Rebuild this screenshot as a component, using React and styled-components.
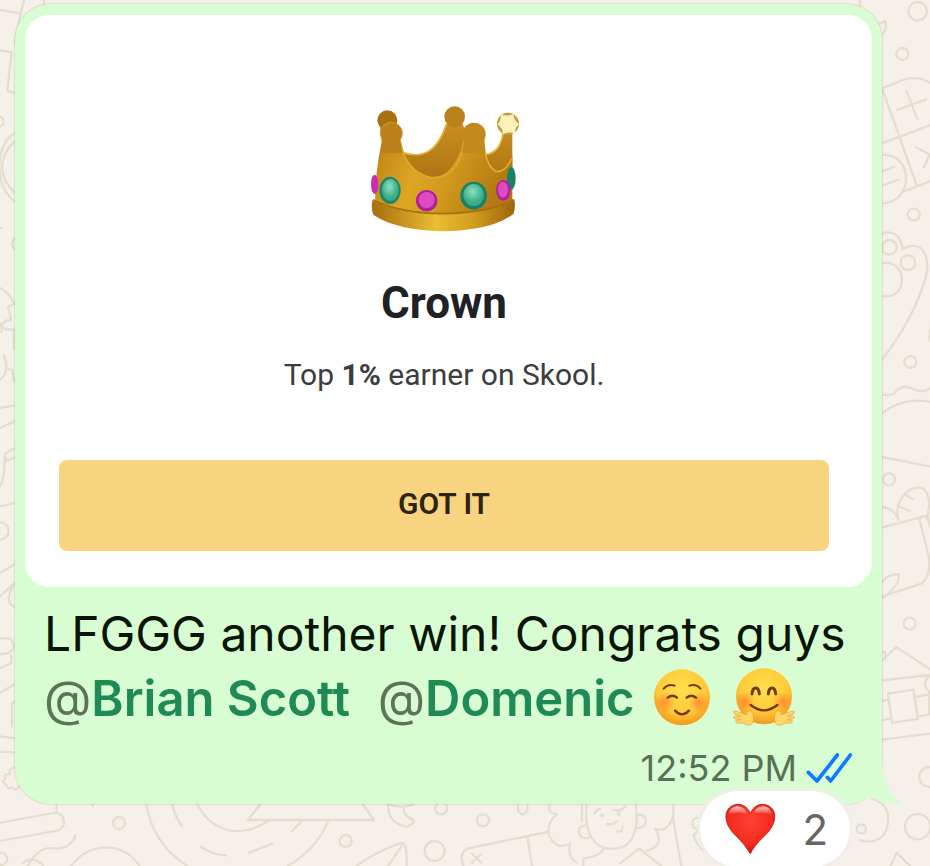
import styled, { createGlobalStyle } from "styled-components";

const GlobalStyle = createGlobalStyle`
  * {
    box-sizing: border-box;
  }

  body {
    margin: 0;
    background-color: #f5f1ea;
    font-family: Inter, "Liberation Sans", sans-serif;
  }
`;

const Chat = styled.main`
  position: relative;
  min-height: 100vh;
  padding: 4px 48px 0 15px;
  overflow: hidden;
`;

const Wallpaper = styled.svg`
  position: absolute;
  top: 0;
  left: 0;
  width: 100%;
  height: 100%;
  fill: none;
  stroke: #e6ddd1;
  stroke-width: 7;
  stroke-linecap: round;
  stroke-linejoin: round;
`;

const Message = styled.article`
  position: relative;
  display: flex;
  flex-direction: column;
  align-items: flex-end;
`;

const Bubble = styled.div`
  position: relative;
  z-index: 0;
  width: 100%;
  padding: 11px 10px 16px;
  border-radius: 36px;
  background-color: #d8fdd2;
  box-shadow: 0 0 1px 1px rgba(120, 110, 90, 0.16);
`;

/* sits above the bubble background but under the text */
const Tail = styled.svg`
  position: absolute;
  right: -20px;
  bottom: 0;
  z-index: -1;
  width: 60px;
  height: 46px;
  fill: #d8fdd2;
`;

const Card = styled.section`
  display: flex;
  flex-direction: column;
  align-items: center;
  padding: 80px 43px 36px 34px;
  border-radius: 24px;
  background-color: #fff;
  color: #202124;
  font-family: Roboto, "Liberation Sans", sans-serif;
`;

const CrownIcon = styled.svg`
  width: 170px;
  height: 145px;
`;

const Title = styled.h1`
  margin: 36px 0 0;
  font-size: 44px;
  font-weight: 700;
  line-height: 54px;
`;

const Caption = styled.p`
  margin: 27px 0 0;
  color: #3c3d40;
  font-size: 30px;
  line-height: 36px;
`;

const Button = styled.button`
  width: 100%;
  height: 91px;
  margin-top: 67px;
  padding: 0 0 4px;
  border: none;
  border-radius: 8px;
  background-color: #f8d481;
  color: #2c2415;
  font-family: inherit;
  font-size: 30px;
  font-weight: 600;
`;

const Text = styled.p`
  margin: 14px 0 0;
  padding: 0 19px;
  color: #0a1508;
  font-size: 48px;
  line-height: 65px;
`;

const Mention = styled.a`
  margin-right: 14px;
  color: #1f8a56;
  font-size: 49px;
  font-weight: 600;
  text-decoration: none;
`;

const At = styled.span`
  color: #5c7358;
  font-weight: 400;
`;

const Emoji = styled.svg`
  width: 66px;
  height: 60px;
  margin-right: 16px;
  vertical-align: -11px;
`;

const Meta = styled.div`
  display: flex;
  align-items: center;
  justify-content: flex-end;
  gap: 8px;
  margin-top: 17px;
  padding-right: 18px;
  color: #597056;
  font-size: 36px;
  line-height: 40px;
`;

const Ticks = styled.svg`
  width: 49px;
  height: 35px;
  fill: none;
  stroke: #0b7cff;
  stroke-width: 11;
  stroke-linecap: round;
  stroke-linejoin: round;
`;

const Reaction = styled.button`
  position: relative;
  z-index: 1;
  display: flex;
  align-items: center;
  gap: 26px;
  height: 76px;
  margin: -13px 32px -2px 0;
  padding: 0 22px 0 24px;
  border: none;
  border-radius: 38px;
  background-color: #fff;
  box-shadow: 0 0 0 3px #f1eee6;
  color: #666;
  font-family: inherit;
  font-size: 42px;
`;

const Heart = styled.svg`
  width: 52px;
  height: 52px;
`;

function Doodles() {
  return (
    <Wallpaper
      viewBox="0 0 930 866"
      preserveAspectRatio="xMinYMin slice"
      aria-hidden="true"
    >
      {/* left edge */}
      <g transform="scale(0.3333)">
        <path d="M0 30l62 11M72 0L62 42 44 130M132 0v18M0 152l35 4-13 117 21 6" />
        <circle cx="-4" cy="365" r="15" />
        <path d="M44 400C-14 430-20 560 44 604M44 424C-6 470-6 530 44 578M0 684h6M44 714c-12 12-12 22 0 34" />
        <path d="M0 864q32 16 42 48l-18 10 10 38q-28 0-28 20 8 12 36 8v60M0 970q8 16 4 26M12 1066q18 50-12 74M20 1108h16l6 36M0 1224l44-8M0 1284l44-20" />
      </g>
      <g transform="translate(0 433) scale(0.3333)">
        <path d="M44 46L18 60q-8 12 4 22l22-8M14 74Q14 140 0 160M0 220l44-10M0 420l44-26M0 490l44-40M44 450q-18 30-18 50 4 16 18 22" />
        <circle cx="0" cy="294" r="26" />
        <path d="M0 616h28q14 8 14 28-10 20-42 20M34 666v24L0 706M0 780l44-26M44 806l-8 4v70M0 910l44 6M0 956l44 2" />
        <path d="M44 1004q-20 4-14 20-20-4-14 14-14 8 4 18-2 14 18 8 6 12 18-2M0 1170l170-32v-30M0 1224l176-32q24-14 12-42l-18-12" />
        <circle cx="4" cy="1278" r="18" />
        <path d="M84 1299q32-62 80-52 50 0 62-40M70 1290q30-24 60 8" />
      </g>
      {/* right edge */}
      <g transform="translate(860 0) scale(0.3333)">
        <circle cx="173" cy="34" r="28" />
        <circle cx="127" cy="162" r="18" />
        <circle cx="161" cy="644" r="18" />
        <circle cx="88" cy="742" r="22" />
        <circle cx="144" cy="788" r="22" />
        <circle cx="151" cy="1086" r="18" />
        <path d="M0 0v20M58 72l18-10q6 24-10 44M66 265l62-25q50-16 90 14M66 265l104 290M66 430l144-54M132 574l78-30M139 272l33 84M112 330l86-32M168 442l42 22M192 502l18-40" />
        <path d="M66 464c96-4 96 144 0 146M66 515l36-14M66 557l50-18M66 700q54-14 62 48c60-38 90 32 66 94Q160 956 66 1080M66 790c80-14 80 114 0 98M66 1184q34 6 44-12 20-20 46-6 30 14 54 0M66 1240q64-50 144-34M214 980q-12 30 0 50" />
      </g>
      <g transform="translate(860 433) scale(0.3333)">
        <path d="M66 72l144 28M66 284l136-36M116 260c-20-50 34-114 76-92q26 30 8 90M134 184l24 14M120 222l28 12M66 222q36 4 50 38M178 258l28 112q8 60-22 82L66 490M204 256l6 26M66 446q20-24 50-22 6 30-50 74" />
        <circle cx="87" cy="139" r="18" />
        <circle cx="149" cy="572" r="18" />
        <path d="M66 684l42-42 102 66M66 742l144-16M66 656l10 4v18M84 782l76-12 14 88-78 12zM66 804l18-4M66 862l28-6M164 792l46-8M174 850l36-6M66 920l144-18M212 728q-32 20-4 48v68" />
        <circle cx="208" cy="1032" r="30" />
        <circle cx="173" cy="1181" r="38" />
        <circle cx="4" cy="1188" r="14" />
        <path d="M36 1096q60 20 46 82-12 60-82 44M92 1299l18-40 40 40" />
      </g>
      {/* bottom edge */}
      <g transform="translate(0 790) scale(0.3333)">
        <circle cx="357" cy="99" r="18" />
        <circle cx="1037" cy="153" r="18" />
        <circle cx="1324" cy="55" r="18" />
        <circle cx="1304" cy="183" r="30" />
        <path d="M214 228q40-56 108-56 64 4 96 56M278 40v8M438 40q22 124 124 188M516 40q8 40 30 68M590 40c54 104 150 98 218 50M780 44l-36 46h378l-34-48M984 94q-32 80-120 134M905 94l-30 30M602 170q40 26 76 26M748 188l70-28M1070 228q50-40 136-70 16 0 14 70M1206 166l-40 60M1164 44q0 54 54 66 26-6 22-22-30-8-30-38M1164 44q40 12 76 0" />
      </g>
      <g transform="translate(460 780) scale(0.3333)">
        <circle cx="69" cy="121" r="18" />
        <path d="M174 70v22q14 22 28 0V70M270 70q-10 30 20 32-40 40-16 76 20 30 56 14-8 40 20 56M10 258q-16-44 20-54l232-48M202 170l14 88M36 222l28 26M64 222l-28 26" />
        <path d="M380 70c-10 90 24 140 78 136 60 2 82-60 68-136M366 70v54M380 136c-40 0-24 50 8 36M530 106c38-12 36 46 0 36M370 258v-22q60-10 60-34M480 250l58-44 66 52M640 70v40q-18 50-54 36 30 50-24 66M638 110l26 148M404 100q6-14 18-12M460 90q24 6 36-12M442 132q18 4 28-8M472 154q16 4 16-14M720 112q-30 0-20 30 24 8 0 24 10 30 36 50" />
        <circle cx="426" cy="106" r="3" />
        <circle cx="476" cy="102" r="3" />
      </g>
    </Wallpaper>
  );
}

function Crown() {
  return (
    <CrownIcon viewBox="0 0 510 435" role="img" aria-label="Crown">
      <defs>
        <linearGradient id="gold" x1="0" x2="1" y1="0" y2="0.3">
          <stop offset="0" stopColor="#b87d12" />
          <stop offset="0.4" stopColor="#dca622" />
          <stop offset="0.62" stopColor="#d39b1e" />
          <stop offset="1" stopColor="#b47a12" />
        </linearGradient>
        <linearGradient id="inner" x1="0" x2="0" y1="0" y2="1">
          <stop offset="0" stopColor="#c98f22" />
          <stop offset="1" stopColor="#a8700f" />
        </linearGradient>
        <linearGradient id="rim" x1="0" x2="1" y1="0" y2="0">
          <stop offset="0" stopColor="#a66f0c" />
          <stop offset="0.45" stopColor="#e9bd34" />
          <stop offset="0.7" stopColor="#d59e1e" />
          <stop offset="1" stopColor="#9b650c" />
        </linearGradient>
        <radialGradient id="emerald" cx="0.45" cy="0.35">
          <stop offset="0" stopColor="#8de0c0" />
          <stop offset="1" stopColor="#3cab86" />
        </radialGradient>
      </defs>
      <circle cx="85" cy="76" r="30" fill="#a9700f" />
      <path
        d="M62 90Q110 180 150 178Q230 190 264 84H310L345 180H385Q428 170 432 102L460 104V280H90z"
        fill="url(#inner)"
      />
      <path
        d="M130 172Q225 205 262 88"
        fill="none"
        stroke="#e9b537"
        strokeWidth="5"
      />
      <path
        d="M382 178Q428 172 434 100"
        fill="none"
        stroke="#e9b537"
        strokeWidth="5"
      />
      <path
        d="M68 140Q60 110 97 90Q130 100 124 140Q140 230 215 248Q280 250 314 140Q310 100 345 90Q380 100 374 137Q378 212 412 230Q440 232 460 180V330Q270 430 48 330Q48 230 68 140z"
        fill="url(#gold)"
      />
      <path
        d="M124 140Q140 230 215 248Q260 250 286 218M288 216Q312 180 314 140M374 137Q378 212 412 230Q440 232 458 190"
        fill="none"
        stroke="#dfaa2d"
        strokeWidth="5"
      />
      <circle
        cx="97"
        cy="115"
        r="33"
        fill="#ba811b"
        stroke="#cf9930"
        strokeWidth="3"
      />
      <circle cx="345" cy="118" r="35" fill="#c28a1c" />
      <circle cx="287" cy="65" r="31" fill="#bb811b" />
      <path d="M72 125h50l8 50H64z" fill="#ba811b" />
      <path d="M317 128h58l4 46h-70z" fill="#c28a1c" />
      <path
        d="M40 316Q36 348 44 360Q110 405 250 409Q400 407 464 356Q471 330 465 312Q390 354 250 356Q120 357 40 316z"
        fill="url(#rim)"
      />
      <path
        d="M42 314Q120 354 250 356Q390 354 464 314"
        fill="none"
        stroke="#a6700e"
        strokeWidth="5"
      />
      <ellipse cx="47" cy="268" rx="11" ry="29" fill="#c52eaf" />
      <ellipse cx="457" cy="250" rx="13" ry="34" fill="#17826a" />
      <ellipse cx="93" cy="286" rx="32" ry="41" fill="#20856b" />
      <ellipse cx="94" cy="285" rx="25" ry="33" fill="url(#emerald)" />
      <ellipse cx="344" cy="302" rx="40" ry="42" fill="#158166" />
      <ellipse cx="344" cy="300" rx="31" ry="33" fill="url(#emerald)" />
      <circle cx="203" cy="317" r="32" fill="#b21d98" />
      <circle cx="203" cy="315" r="24" fill="#dc4bc2" />
      <ellipse cx="433" cy="286" rx="22" ry="31" fill="#b51f9b" />
      <ellipse cx="432" cy="284" rx="15" ry="24" fill="#dc4bc2" />
      <circle cx="447" cy="86" r="33" fill="#c59a3e" />
      <path
        d="M426 58q20 8 38-2-2 18 16 32-14 12-12 28-20-8-36 2 0-18-16-30 12-14 10-30z"
        fill="#fff2b8"
      />
    </CrownIcon>
  );
}

function FaceGradient({ id }) {
  return (
    <defs>
      <radialGradient id={id} cx="0.5" cy="0.35" r="0.65">
        <stop offset="0" stopColor="#ffe14d" />
        <stop offset="0.65" stopColor="#ffca38" />
        <stop offset="1" stopColor="#f3981f" />
      </radialGradient>
      <radialGradient id={`${id}-blush`}>
        <stop offset="0" stopColor="#ff6d2e" stopOpacity="0.65" />
        <stop offset="1" stopColor="#ff6d2e" stopOpacity="0" />
      </radialGradient>
    </defs>
  );
}

function SmilingFace() {
  return (
    <Emoji viewBox="87 38 198 180" role="img" aria-label="Smiling face">
      <FaceGradient id="smile" />
      <circle cx="186" cy="129" r="84" fill="url(#smile)" />
      <circle cx="135" cy="145" r="31" fill="url(#smile-blush)" />
      <circle cx="237" cy="145" r="31" fill="url(#smile-blush)" />
      <g fill="none" stroke="#713a0b" strokeWidth="6" strokeLinecap="round">
        <path d="M131 103q14-16 33-9M208 94q20-7 33 9" />
        <path d="M143 130q14-12 28 0M200 130q14-12 28 0" strokeWidth="7" />
        <path d="M165 169q21 22 42 0" strokeWidth="7" />
      </g>
    </Emoji>
  );
}

function HuggingFace() {
  return (
    <Emoji viewBox="334 38 198 180" role="img" aria-label="Hugging face">
      <FaceGradient id="hug" />
      <circle cx="433" cy="126" r="84" fill="url(#hug)" />
      <circle cx="376" cy="142" r="30" fill="url(#hug-blush)" />
      <circle cx="490" cy="142" r="30" fill="url(#hug-blush)" />
      <g fill="none" stroke="#713a0b" strokeWidth="9" strokeLinecap="round">
        <path d="M397 119c2-24 20-24 22 0M446 119c2-24 20-24 22 0" />
        <path d="M393 152q40 32 80 0" strokeWidth="7" />
      </g>
      <g stroke="#e99b2c" strokeWidth="2" fill="#ffd668">
        <path d="M394 171q-11-8-13 10l-34-11q-9 0-4 7l20 9-18-1q-6 3 0 8l18 3-14 2q-5 4 2 8l20 1q27 16 31-12 3-14-8-24z" />
        <path d="M472 171q11-8 13 10l34-11q9 0 4 7l-20 9 18-1q6 3 0 8l-18 3 14 2q5 4-2 8l-20 1q-27 16-31-12-3-14 8-24z" />
      </g>
    </Emoji>
  );
}

function ReadTicks() {
  return (
    <Ticks viewBox="555 285 147 105" role="img" aria-label="Read">
      <path d="M565 349l26 26 61-78M622 364l10 11 59-78" />
    </Ticks>
  );
}

function HeartIcon() {
  return (
    <Heart viewBox="802 70 156 156" role="img" aria-label="Heart">
      <defs>
        <radialGradient id="heart" cx="0.5" cy="0.35" r="0.65">
          <stop offset="0" stopColor="#ff4230" />
          <stop offset="0.7" stopColor="#f32a1f" />
          <stop offset="1" stopColor="#c4170f" />
        </radialGradient>
        <linearGradient id="shine" x1="0" x2="0" y1="0" y2="1">
          <stop offset="0" stopColor="#fff" stopOpacity="0.75" />
          <stop offset="1" stopColor="#fff" stopOpacity="0" />
        </linearGradient>
      </defs>
      <path
        d="M881 222Q868 198 838 168C804 138 798 96 824 80C848 66 872 78 881 102C890 78 914 66 938 80C964 96 958 138 924 168Q892 198 881 222z"
        fill="url(#heart)"
        stroke="#cf1f14"
        strokeWidth="3"
      />
      <path
        d="M815 106q4-25 27-26 24 2 30 24-30-12-57 2zM890 104q6-22 29-24 24 2 28 26-30-14-57-2z"
        fill="url(#shine)"
      />
    </Heart>
  );
}

function App() {
  return (
    <>
      <GlobalStyle />
      <Chat>
        <Doodles />
        <Message>
          <Bubble>
            <Tail viewBox="0 0 60 46" aria-hidden="true">
              <path d="M40 0Q40 32 59 45Q42 48 28 38Q20 46 0 46V0z" />
            </Tail>
            <Card>
              <Crown />
              <Title>Crown</Title>
              <Caption>
                Top <strong>1%</strong> earner on Skool.
              </Caption>
              <Button type="button">GOT IT</Button>
            </Card>
            <Text>
              LFGGG another win! Congrats guys
              <br />
              <Mention href="#brian-scott">
                <At>@</At>Brian Scott
              </Mention>{" "}
              <Mention href="#domenic">
                <At>@</At>Domenic
              </Mention>
              <SmilingFace />
              <HuggingFace />
            </Text>
            <Meta>
              <time dateTime="12:52">12:52 PM</time>
              <ReadTicks />
            </Meta>
          </Bubble>
          <Reaction type="button">
            <HeartIcon />
            <span>2</span>
          </Reaction>
        </Message>
      </Chat>
    </>
  );
}

export default App;
